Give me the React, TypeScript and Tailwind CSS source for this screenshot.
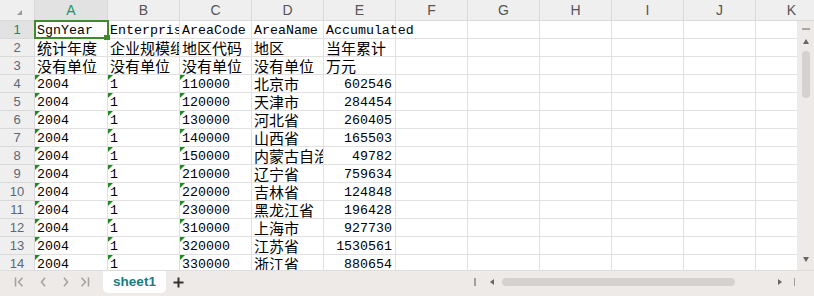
import React from "react";

const colLetters = ["A", "B", "C", "D", "E", "F", "G", "H", "I", "J", "K"];
const colW = ["w-[73px]", "w-[72px]", "w-[72px]", "w-[72px]", "w-[72px]", "w-[72px]", "w-[72px]", "w-[72px]", "w-[72px]", "w-[72px]", "w-[72px]"];

const data: [string, string, string][] = [
  ["110000", "北京市", "602546"],
  ["120000", "天津市", "284454"],
  ["130000", "河北省", "260405"],
  ["140000", "山西省", "165503"],
  ["150000", "内蒙古自治区", "49782"],
  ["210000", "辽宁省", "759634"],
  ["220000", "吉林省", "124848"],
  ["230000", "黑龙江省", "196428"],
  ["310000", "上海市", "927730"],
  ["320000", "江苏省", "1530561"],
  ["330000", "浙江省", "880654"],
];

type Cell = { t: string; cjk?: boolean; right?: boolean; tri?: boolean; overflow?: boolean };

const rows: Cell[][] = [
  [
    { t: "SgnYear" },
    { t: "EnterpriseScale" },
    { t: "AreaCode" },
    { t: "AreaName" },
    { t: "Accumulated", overflow: true },
  ],
  [
    { t: "统计年度", cjk: true },
    { t: "企业规模组别", cjk: true },
    { t: "地区代码", cjk: true },
    { t: "地区", cjk: true },
    { t: "当年累计", cjk: true },
  ],
  [
    { t: "没有单位", cjk: true },
    { t: "没有单位", cjk: true },
    { t: "没有单位", cjk: true },
    { t: "没有单位", cjk: true },
    { t: "万元", cjk: true },
  ],
  ...data.map(([code, name, val]) => [
    { t: "2004", tri: true },
    { t: "1", tri: true },
    { t: code, tri: true },
    { t: name, cjk: true },
    { t: val, right: true },
  ]),
];

const mono = "font-['Liberation_Mono',monospace] text-[13.3px]";
const cjkFont = "font-['Noto_Sans_CJK_SC',sans-serif] text-[15px]";

function GridCell({ c, w }: { c?: Cell; w: string }) {
  return (
    <div
      className={`relative h-[18px] shrink-0 ${w} border-r border-b border-[#e1e1e1] bg-white ${
        c?.overflow ? "overflow-visible z-10" : "overflow-hidden"
      }`}
    >
      {c && (
        <div
          className={`whitespace-nowrap text-black ${c.cjk ? cjkFont + " leading-[17px]" : mono + " leading-[20px]"} ${
            c.right ? "text-right pr-[3px]" : "pl-[2px]"
          }`}
        >
          {c.t}
        </div>
      )}
      {c?.tri && (
        <div className="absolute left-0 top-0 h-0 w-0 border-t-[5px] border-r-[5px] border-t-[#1f8a1f] border-r-transparent" />
      )}
    </div>
  );
}

function NavIcon({ kind }: { kind: "first" | "prev" | "next" | "last" }) {
  const stroke = "#a3a3a3";
  return (
    <svg width="11" height="10" viewBox="0 0 11 10" fill="none">
      {kind === "first" && (
        <>
          <line x1="1.5" y1="0.5" x2="1.5" y2="9.5" stroke={stroke} strokeWidth="1.6" />
          <polyline points="8.5,0.8 4.5,5 8.5,9.2" stroke={stroke} strokeWidth="1.6" fill="none" />
        </>
      )}
      {kind === "prev" && <polyline points="7,0.8 3.5,5 7,9.2" stroke={stroke} strokeWidth="1.6" fill="none" />}
      {kind === "next" && <polyline points="4,0.8 7.5,5 4,9.2" stroke={stroke} strokeWidth="1.6" fill="none" />}
      {kind === "last" && (
        <>
          <polyline points="2.5,0.8 6.5,5 2.5,9.2" stroke={stroke} strokeWidth="1.6" fill="none" />
          <line x1="9.5" y1="0.5" x2="9.5" y2="9.5" stroke={stroke} strokeWidth="1.6" />
        </>
      )}
    </svg>
  );
}

export default function App() {
  return (
    <div className="relative flex h-[296px] w-[814px] flex-col overflow-hidden bg-white font-['Liberation_Sans',sans-serif]">
      {/* Column header */}
      <div className="flex h-[21px] shrink-0 overflow-hidden">
        <div className="relative h-[21px] w-[35px] shrink-0 border-r border-b border-[#d9d9d9] bg-[#efefef]">
          <div className="absolute left-[17px] top-[10px] h-0 w-0 border-b-[5px] border-l-[5px] border-b-[#9a9a9a] border-l-transparent" />
        </div>
        {colLetters.map((l, i) => (
          <div
            key={l}
            className={`flex h-[21px] shrink-0 ${colW[i]} items-center justify-center border-r border-b border-[#d9d9d9] text-[14px] ${
              i === 0 ? "bg-[#e2e2e2] text-[#23926f]" : "bg-[#efefef] text-[#555]"
            }`}
          >
            {l}
          </div>
        ))}
      </div>

      {/* Body */}
      <div className="flex h-[249px] shrink-0 overflow-hidden">
        <div className="flex-1 overflow-hidden">
          {rows.map((r, ri) => (
            <div key={ri} className="flex h-[18px]">
              <div
                className={`flex h-[18px] w-[35px] shrink-0 items-center justify-center border-r border-b border-[#d9d9d9] text-[13px] ${
                  ri === 0 ? "bg-[#e2e2e2] text-[#2e7f68]" : "bg-[#efefef] text-[#5b6876]"
                }`}
              >
                {ri + 1}
              </div>
              {colLetters.map((l, ci) => (
                <GridCell key={l} c={r[ci]} w={colW[ci]} />
              ))}
            </div>
          ))}
        </div>
        {/* vertical scrollbar */}
        <div className="relative flex w-[17px] shrink-0 flex-col items-center bg-[#eeeae8]">
          <div className="mt-[7px] h-[1.5px] w-[8px] bg-[#a8a8a8]" />
          <div className="mt-[9px] h-0 w-0 border-x-[3.5px] border-b-[5px] border-x-transparent border-b-[#666]" />
          <div className="mt-[7px] h-[47px] w-[8px] rounded-full bg-[#d5d1cf]" />
          <div className="absolute bottom-[8px] h-0 w-0 border-x-[3.5px] border-t-[5px] border-x-transparent border-t-[#666]" />
        </div>
      </div>

      {/* Tab bar */}
      <div className="flex h-[26px] shrink-0 items-start border-t border-[#dedede] bg-[#eeeae8]">
        <div className="flex h-[22px] items-center">
          <div className="ml-[14px]"><NavIcon kind="first" /></div>
          <div className="ml-[13px]"><NavIcon kind="prev" /></div>
          <div className="ml-[11px]"><NavIcon kind="next" /></div>
          <div className="ml-[8px]"><NavIcon kind="last" /></div>
        </div>
        <div className="ml-[13px] flex h-[22px] w-[63px] items-center justify-center rounded-b-[5px] bg-white text-[13.5px] font-bold text-[#1b7b80]">
          sheet1
        </div>
        <div className="ml-[7px] flex h-[22px] items-center">
          <svg width="11" height="11" viewBox="0 0 11 11">
            <line x1="5.5" y1="0.5" x2="5.5" y2="10.5" stroke="#333" strokeWidth="2" />
            <line x1="0.5" y1="5.5" x2="10.5" y2="5.5" stroke="#333" strokeWidth="2" />
          </svg>
        </div>
        <div className="flex-1" />
        <div className="flex h-[22px] items-center">
          <div className="h-[8px] w-[1.5px] bg-[#a0a0a0]" />
          <div className="ml-[14px] h-0 w-0 border-y-[3px] border-r-[4px] border-y-transparent border-r-[#666]" />
          <div className="ml-[8px] h-[8px] w-[233px] rounded-full bg-[#d5d1cf]" />
          <div className="ml-[43px] h-0 w-0 border-y-[3px] border-l-[4px] border-y-transparent border-l-[#666]" />
          <div className="ml-[12px] mr-[19px] h-[8px] w-[1.5px] bg-[#a0a0a0]" />
        </div>
      </div>

      {/* Selection overlay for A1 */}
      <div className="pointer-events-none absolute left-[34px] top-[20px] z-30 h-[19px] w-[75px] border-2 border-[#3f8a2a]" />
      <div className="pointer-events-none absolute left-[104px] top-[35px] z-30 h-[5px] w-[6px] bg-[#3f8a2a]" />
    </div>
  );
}
